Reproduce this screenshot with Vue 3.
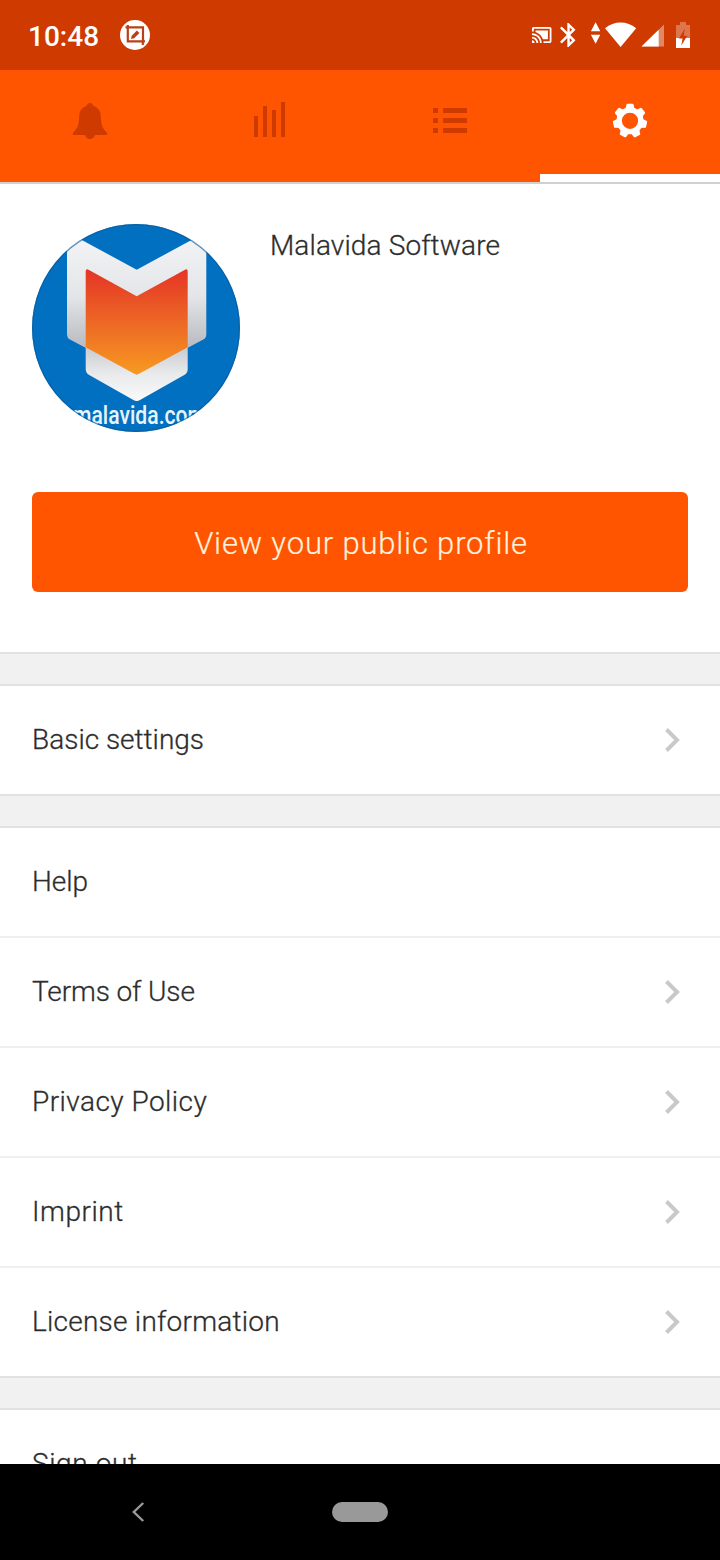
<script setup>
const teeth = Array.from({ length: 7 }, (_, i) => (i * 360) / 7)

const groups = [
  [{ label: 'Basic settings', arrow: true, key: 'basic' }],
  [
    { label: 'Help', arrow: false, key: 'help' },
    { label: 'Terms of Use', arrow: true, key: 'terms' },
    { label: 'Privacy Policy', arrow: true, key: 'privacy' },
    { label: 'Imprint', arrow: true, key: 'imprint' },
    { label: 'License information', arrow: true, key: 'license' },
  ],
  [{ label: 'Sign out', arrow: false, key: 'signout' }],
]
</script>

<template>
  <div class="screen">
    <header class="status">
      <span class="time">10:48</span>
      <svg class="edit-badge" viewBox="0 0 30 30" width="30" height="30">
        <circle cx="15" cy="15" r="15" fill="#fff" />
        <path d="M5.500 7.300H23V22M7.800 5v16.400H25M22.800 21v4" fill="none" stroke="#b8401a" stroke-width="2.200" />
        <path d="M11 19l.7-3.300 5.200-5.200 2.500 2.500-5.200 5.200z" fill="#b8401a" />
      </svg>
      <svg class="sys-icons" viewBox="530 18 164 34" width="164" height="34" fill="#fff">
        <path transform="translate(531.1 24.3) scale(.886)" d="M1 18v3h3c0-1.66-1.34-3-3-3zm0-4v2c2.76 0 5 2.24 5 5h2c0-3.87-3.13-7-7-7zm18-7H5v1.63c3.96 1.28 7.09 4.41 8.37 8.37H19V7zM1 10v2c4.97 0 9 4.03 9 9h2c0-6.08-4.93-11-11-11zm20-7H3c-1.1 0-2 .9-2 2v3h2V5h18v14h-7v2h7c1.1 0 2-.9 2-2V5c0-1.1-.9-2-2-2z" />
        <path transform="translate(553.9 20.6) scale(1.22 1.2)" d="M17.71 7.71L12 2h-1v7.59L6.41 5 5 6.41 10.59 12 5 17.59 6.41 19 11 14.41V22h1l5.71-5.71-4.3-4.29 4.3-4.29zM13 5.83l1.88 1.88L13 9.59V5.83zm1.88 10.46L13 18.17v-3.76l1.88 1.88z" />
        <path d="M595.6 22.3l4.7 8.9h-9.4zM595.6 43.7l4.7-9h-9.4z" />
        <path d="M605 28.2C609.5 24.2 615 22.4 620.6 22.4S631.7 24.2 636.2 28.2L620.6 47z" />
        <path d="M641.5 46.6L664 24.6V46.6z" opacity=".4" />
        <path d="M641.5 46.6L658.7 29.8V46.6z" />
        <path d="M676 25h4v-3h6v3h4v13h-14z" opacity=".3" />
        <path d="M676 38h14v10h-14z" />
        <path d="M684.8 28.5L679 38.6h3.600l-1.300 6.800 6-9.600h-3.600z" fill="#cf3a00" />
      </svg>
    </header>

    <nav class="tabs">
      <div class="tab">
        <svg viewBox="0 0 40 40" width="40" height="40" fill="#cf3a00">
          <path d="M20 3c1.900 0 2.900 1.100 3.200 2.700 4.700 1.500 7.400 4.900 7.600 10.100.3 8.500 1.400 12.700 6 16.700 1.100 1 .5 2.500-.8 2.500H25c-.8 2.600-2.600 4-5 4s-4.200-1.400-5-4H4c-1.300 0-1.900-1.500-.8-2.500 4.600-4 5.700-8.200 6-16.700.2-5.200 2.900-8.600 7.600-10.100C17.100 4.100 18.100 3 20 3z" />
        </svg>
      </div>
      <div class="tab">
        <svg viewBox="0 0 40 40" width="40" height="40" fill="#cf3a00">
          <path d="M4 16h4v21H4zM13 6h4v31h-4zM22 10h4v27h-4zM31 2h4v35h-4z" />
        </svg>
      </div>
      <div class="tab">
        <svg viewBox="0 0 40 40" width="40" height="40" fill="#cf3a00">
          <path d="M3 8h5v5H3zM13 8h24v5H13zM3 18h5v5H3zM13 18h24v5H13zM3 28h5v5H3zM13 28h24v5H13z" />
        </svg>
      </div>
      <div class="tab active">
        <svg viewBox="0 0 40 40" width="40" height="40">
          <circle cx="20" cy="20.800" r="10.800" fill="none" stroke="#fff" stroke-width="5.400" />
          <path v-for="a in teeth" :key="a" :transform="`rotate(${a} 20 20.800)`" d="M15.200 10l1.200-5.200q.2-1 1.200-1h4.800q1 0 1.200 1l1.200 5.200z" fill="#fff" />
        </svg>
      </div>
    </nav>

    <main class="content">
      <section class="profile">
        <div class="identity">
          <svg class="avatar" viewBox="0 0 208 208" width="208" height="208">
            <defs>
              <clipPath id="disc"><circle cx="104" cy="104" r="104" /></clipPath>
              <linearGradient id="silver" x1="0" y1="0" x2="0" y2="1">
                <stop offset="0" stop-color="#f4f5f7" />
                <stop offset=".45" stop-color="#e4e5e8" />
                <stop offset=".75" stop-color="#bfc1c6" />
                <stop offset="1" stop-color="#a9abb0" />
              </linearGradient>
              <linearGradient id="pale" x1="0" y1="0" x2="0" y2="1">
                <stop offset="0" stop-color="#c9cbcf" />
                <stop offset=".5" stop-color="#e9eaec" />
                <stop offset="1" stop-color="#fafafa" />
              </linearGradient>
              <linearGradient id="flame" x1="0" y1="0" x2="0" y2="1">
                <stop offset="0" stop-color="#e43426" />
                <stop offset=".55" stop-color="#ee6c25" />
                <stop offset="1" stop-color="#f79a20" />
              </linearGradient>
            </defs>
            <g clip-path="url(#disc)">
              <rect width="208" height="208" fill="#0270c0" />
              <path d="M35 8L104.700 45.700 174.300 8V110q0 4-3 5.600L104.700 151 38 115.600q-3-1.600-3-5.600z" fill="url(#silver)" />
              <path d="M53.700 123L104.700 150.500 155.700 123V145q0 4-3.500 6L108 176q-3.300 2-6.600 0L57.200 151q-3.500-2-3.500-6z" fill="url(#pale)" />
              <path d="M53.700 47.500q0-3 2.800-1.800L104.700 72.300 153 45.700q2.700-1.200 2.700 1.800V123.300L107 149.800q-2.300 1.200-4.600 0L53.700 123.300z" fill="url(#flame)" />
              <text x="41" y="199.500" textLength="133" lengthAdjust="spacingAndGlyphs" class="brand">malavida.com</text>
            </g>
            <circle cx="104" cy="104" r="103.400" fill="none" stroke="#0b5796" stroke-opacity=".6" stroke-width="1.200" />
          </svg>
          <h1 class="name">Malavida Software</h1>
        </div>
        <button class="cta"><span>View your public profile</span></button>
      </section>

      <template v-for="(group, g) in groups" :key="g">
        <div class="gap"></div>
        <ul class="group">
          <li v-for="row in group" :key="row.key" class="row">
            <span class="label" :class="row.key">{{ row.label }}</span>
            <svg v-if="row.arrow" viewBox="0 0 16 26" width="16" height="26">
              <path d="M2.500 2.500L13 13 2.500 23.500" fill="none" stroke="#c9c9c9" stroke-width="4" />
            </svg>
          </li>
        </ul>
      </template>
    </main>

    <footer class="navbar">
      <svg class="back" viewBox="0 0 14 22" width="14" height="22">
        <path d="M12.200 2L2.800 11l9.400 9" fill="none" stroke="#999" stroke-width="2.400" />
      </svg>
      <span class="pill"></span>
    </footer>
  </div>
</template>

<style>
body {
  margin: 0;
  background: #fff;
}
</style>

<style scoped>
.screen {
  display: flex;
  flex-direction: column;
  width: 720px;
  height: 1560px;
  overflow: hidden;
  background: #fff;
  color: #2d2d2d;
  font-family: Roboto, "Liberation Sans", sans-serif;
}
.status {
  display: flex;
  align-items: center;
  flex: none;
  height: 70px;
  box-sizing: border-box;
  padding: 0 26px 0 28px;
  background: #cf3a00;
  color: #fff;
}
.time {
  width: 92px;
  font-size: 28px;
  font-weight: 500;
  line-height: 32px;
  padding-top: 4px;
}
.sys-icons {
  margin-left: auto;
}
.tabs {
  display: flex;
  flex: none;
  height: 112px;
  background: #ff5500;
  border-bottom: 2px solid #d0d0d0;
}
.tab {
  flex: 1;
  display: flex;
  justify-content: center;
  box-sizing: border-box;
  padding-top: 30px;
}
.tab.active {
  border-bottom: 8px solid #fff;
}
.content {
  flex: 1;
  min-height: 0;
  overflow: hidden;
}
.profile {
  height: 468px;
  box-sizing: border-box;
  padding: 40px 32px 0;
}
.identity {
  display: flex;
  gap: 30px;
}
.avatar {
  flex: none;
}
.brand {
  font-family: Roboto, sans-serif;
  font-size: 25px;
  font-weight: 500;
  fill: #e6f5fc;
}
.name {
  margin: 6px 0 0;
  font-size: 28px;
  font-weight: 300;
  line-height: 32px;
  letter-spacing: 0.13px;
  -webkit-text-stroke: 0.3px currentColor;
}
.cta {
  display: flex;
  align-items: center;
  justify-content: center;
  width: 100%;
  height: 100px;
  margin-top: 60px;
  padding: 2px 0 0 2px;
  border: 0;
  border-radius: 6px;
  background: #ff5500;
  color: #fff3df;
  font-family: inherit;
  font-size: 31px;
  font-weight: 300;
  letter-spacing: 0.83px;
  -webkit-text-stroke: 0.2px currentColor;
}
.gap {
  height: 30px;
  background: #f1f1f1;
  border-top: 2px solid #e2e2e2;
  border-bottom: 2px solid #e2e2e2;
}
.group {
  margin: 0;
  padding: 0;
  list-style: none;
}
.row {
  display: flex;
  align-items: center;
  justify-content: space-between;
  height: 108px;
  padding: 0 40px 0 32px;
}
.row + .row {
  border-top: 2px solid #f0f0f0;
}
.label {
  font-size: 28px;
  font-weight: 300;
  line-height: 32px;
  letter-spacing: 0;
  -webkit-text-stroke: 0.3px currentColor;
}
.terms {
  letter-spacing: -0.1px;
}
.privacy {
  letter-spacing: 0.45px;
}
.imprint {
  letter-spacing: 0.55px;
}
.license {
  letter-spacing: 0.25px;
}
.signout {
  letter-spacing: 0.6px;
}
.navbar {
  display: grid;
  grid-template-columns: 131px 1fr 56px 1fr 131px;
  align-items: center;
  flex: none;
  height: 96px;
  background: #000;
}
.back {
  grid-column: 2;
}
.pill {
  grid-column: 3;
  height: 20px;
  border-radius: 10px;
  background: #999;
}
</style>
